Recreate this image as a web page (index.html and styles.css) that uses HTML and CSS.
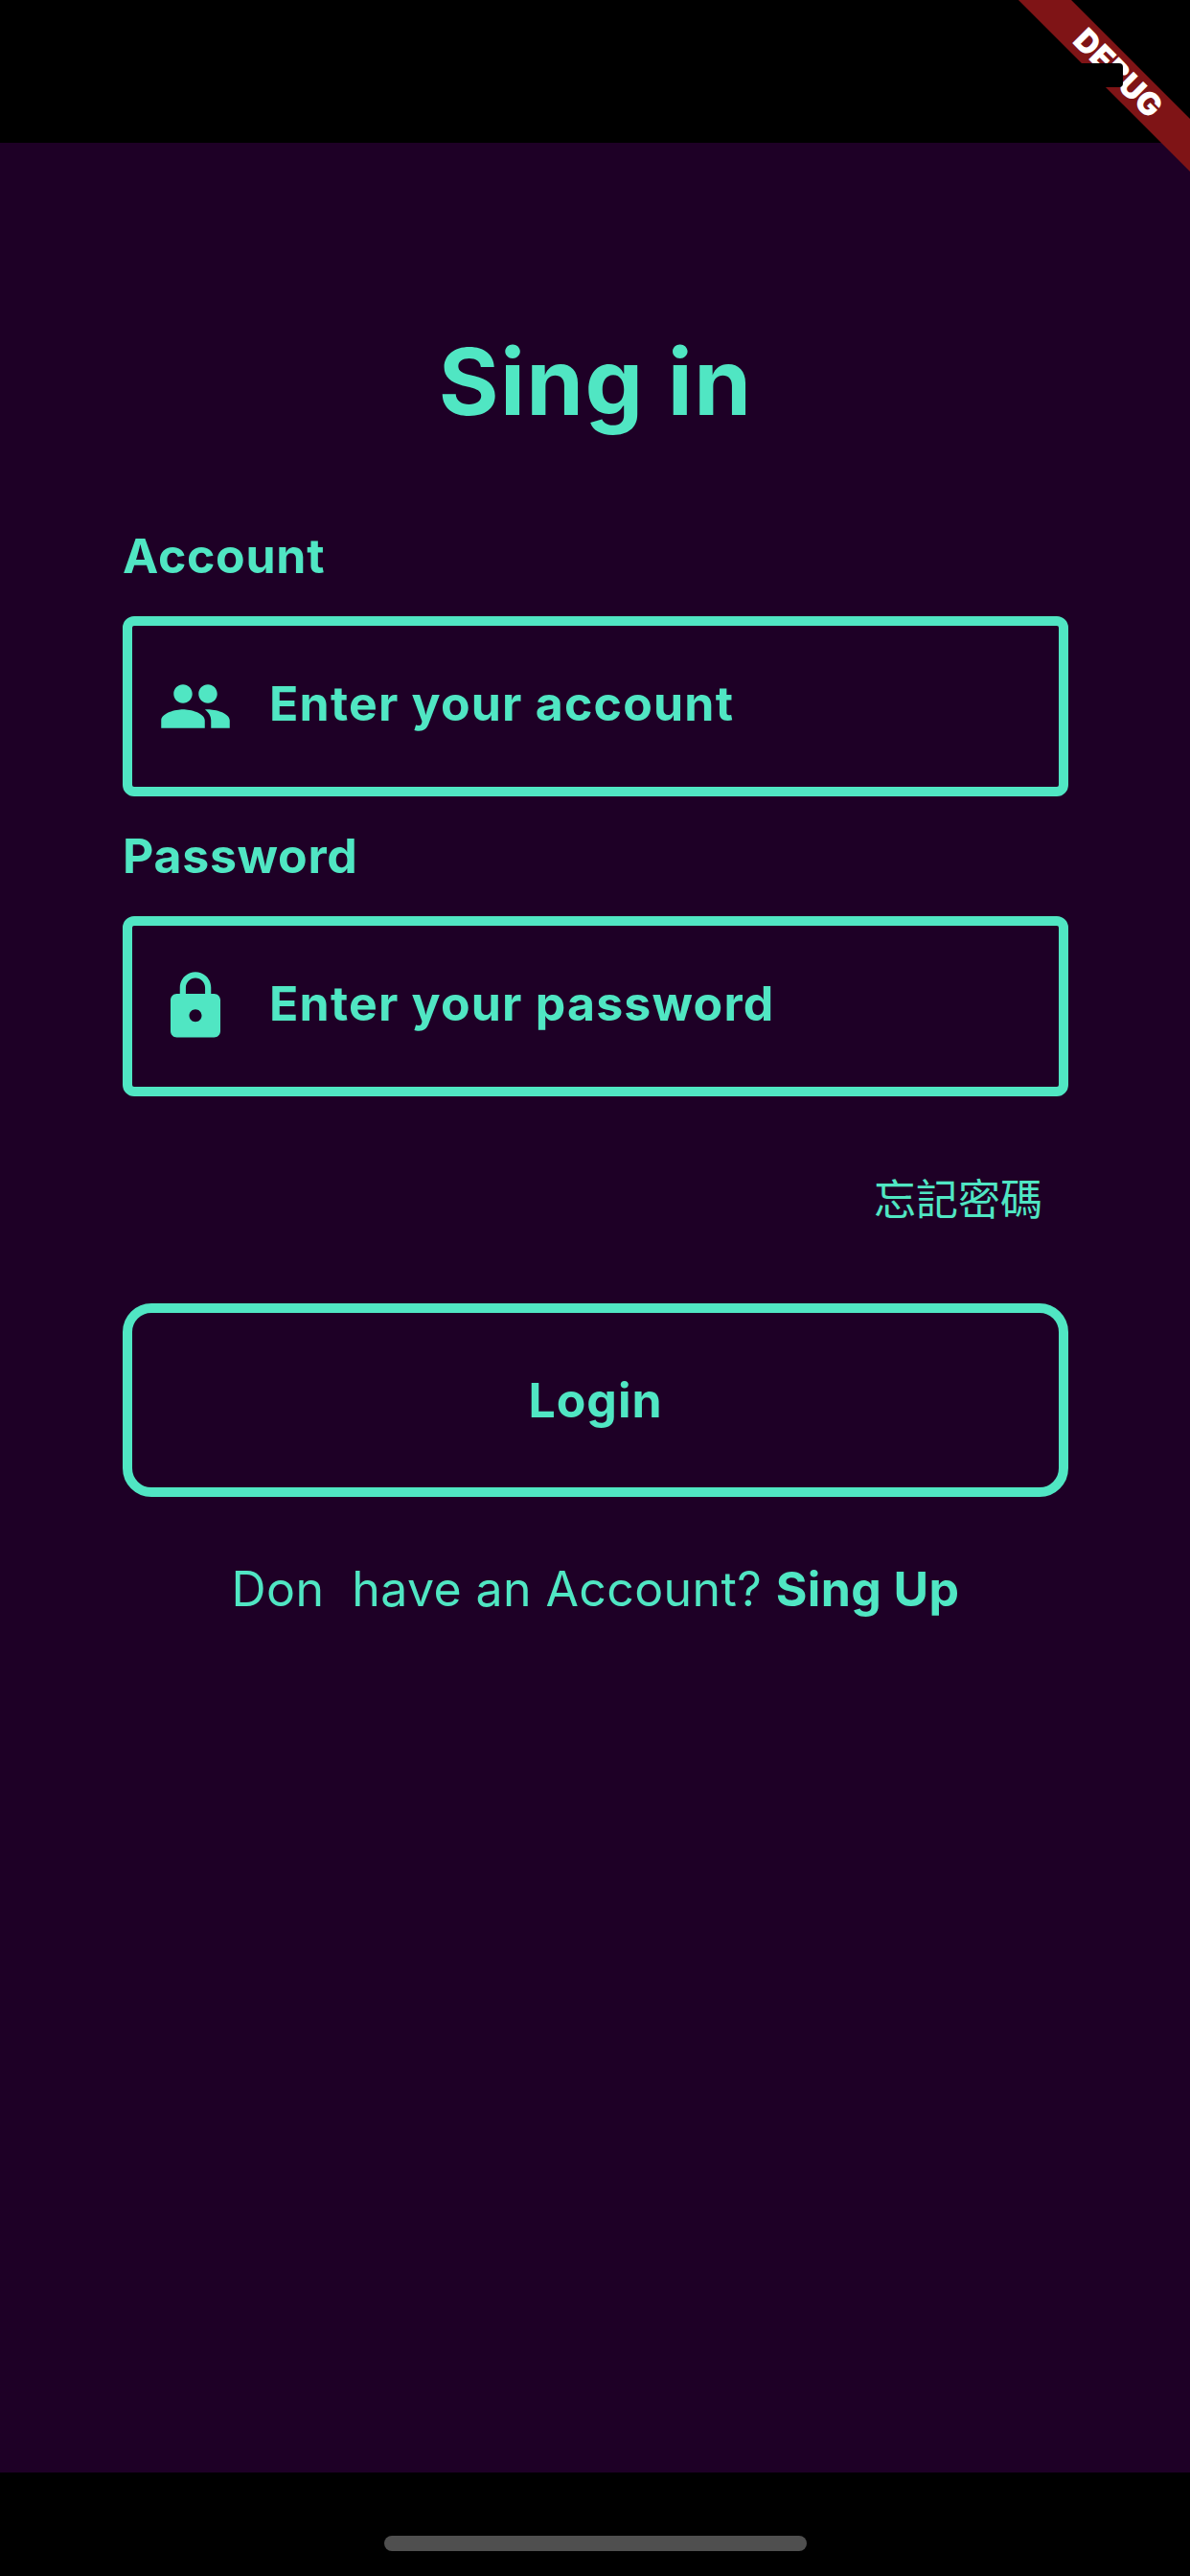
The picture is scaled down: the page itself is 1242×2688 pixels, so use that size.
FILE: index.html
```html
<!DOCTYPE html>
<html lang="en">
<head>
<meta charset="utf-8">
<title>Sing in</title>
<link rel="stylesheet" href="styles.css">
</head>
<body>
<div class="screen">
  <div class="status-bar"></div>
  <main class="content">
    <h1 class="title">Sing in</h1>
    <label class="label label-account">Account</label>
    <div class="field">
      <svg class="icon" viewBox="0 0 24 24"><path d="M16 11c1.66 0 2.99-1.34 2.99-3S17.66 5 16 5c-1.66 0-3 1.34-3 3s1.34 3 3 3zm-8 0c1.66 0 2.99-1.34 2.99-3S9.66 5 8 5C6.34 5 5 6.34 5 8s1.34 3 3 3zm0 2c-2.33 0-7 1.17-7 3.5V19h14v-2.5c0-2.33-4.67-3.5-7-3.5zm8 0c-.29 0-.62.02-.97.05 1.16.84 1.97 1.97 1.97 3.45V19h6v-2.5c0-2.33-4.67-3.5-7-3.5z"/></svg>
      <span class="hint">Enter your account</span>
    </div>
    <label class="label label-password">Password</label>
    <div class="field">
      <svg class="icon" viewBox="0 0 24 24"><path d="M18 8h-1V6c0-2.76-2.24-5-5-5S7 3.24 7 6v2H6c-1.1 0-2 .9-2 2v10c0 1.1.9 2 2 2h12c1.1 0 2-.9 2-2V10c0-1.1-.9-2-2-2zm-6 9c-1.1 0-2-.9-2-2s.9-2 2-2 2 .9 2 2-.9 2-2 2zm3.100-9H8.900V6c0-1.710 1.390-3.100 3.100-3.100 1.710 0 3.100 1.390 3.100 3.100v2z"/></svg>
      <span class="hint">Enter your password</span>
    </div>
    <div class="forgot"><span>忘記密碼</span></div>
    <button class="login" type="button">Login</button>
    <p class="signup">Don&nbsp; have an Account? <strong>Sing Up</strong></p>
  </main>
  <div class="home-bar"><div class="home-indicator"></div></div>
  <div class="debug-banner"><span>DEBUG</span></div>
  <div class="sensor"></div>
</div>
</body>
</html>
```
FILE: styles.css
```css
* { box-sizing: border-box; }
html, body { margin: 0; padding: 0; background: #000; }
.screen {
  position: relative;
  width: 1242px;
  height: 2688px;
  overflow: hidden;
  display: flex;
  flex-direction: column;
  font-family: Inter, "Noto Sans CJK TC", sans-serif;
  color: #50e6c3;
}
.status-bar { height: 149px; background: #000; flex: none; }
.content {
  flex: 1;
  background: #1e0026;
  padding: 0 127px 0 128px;
  display: flex;
  flex-direction: column;
}
.title {
  margin: 191px 0 0;
  font-size: 96px;
  line-height: 116px;
  font-weight: 700;
  letter-spacing: 1.4px;
  text-align: center;
}
.label {
  display: block;
  font-size: 50px;
  line-height: 58px;
  font-weight: 700;
  letter-spacing: 0.7px;
}
.label-account { margin-top: 95px; margin-bottom: 34px; }
.label-password { margin-top: 33px; margin-bottom: 34px; }
.field {
  height: 188px;
  border: 10px solid #50e6c3;
  border-radius: 12px;
  display: flex;
  align-items: center;
  padding-left: 27px;
  gap: 38px;
}
.icon { width: 78px; height: 78px; fill: #50e6c3; flex: none; }
.hint {
  font-size: 50px;
  font-weight: 700;
  line-height: 58px;
  letter-spacing: 1.2px;
  padding-bottom: 7px;
}
.forgot {
  margin-top: 76px;
  padding-right: 27px;
  display: flex;
  justify-content: flex-end;
  font-size: 44px;
  line-height: 64px;
  font-weight: 400;
}
.login {
  margin-top: 76px;
  height: 202px;
  border: 10px solid #50e6c3;
  border-radius: 30px;
  background: transparent;
  color: inherit;
  font: inherit;
  font-size: 50px;
  font-weight: 700;
  letter-spacing: 1px;
}
.signup {
  margin: 66px 0 0;
  text-align: center;
  font-size: 50px;
  line-height: 60px;
  font-weight: 400;
  letter-spacing: 0.4px;
}
.signup strong { font-weight: 700; }
.home-bar {
  height: 108px;
  flex: none;
  background: #000;
  display: flex;
  justify-content: center;
  padding-top: 66px;
}
.home-indicator { width: 441px; height: 16px; border-radius: 8px; background: #4f4f4f; }
.debug-banner {
  position: absolute;
  top: 76px;
  left: 1167px;
  width: 400px;
  height: 39px;
  margin: -19.5px 0 0 -200px;
  transform: rotate(45deg);
  background: #7f1416;
  color: #fff;
  font-size: 33px;
  font-weight: 900;
  line-height: 39px;
  text-align: center;
}
.sensor {
  position: absolute;
  left: 1120px;
  top: 66px;
  width: 52px;
  height: 25px;
  background: #000;
  border-radius: 4px;
}
```
